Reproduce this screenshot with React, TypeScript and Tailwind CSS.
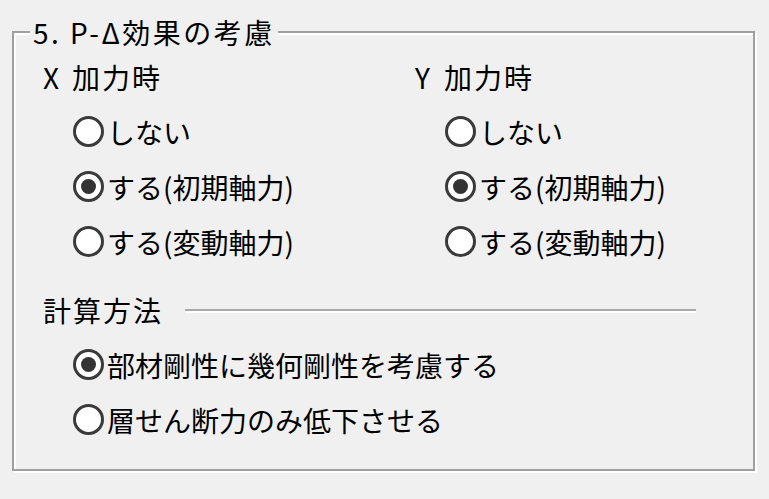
import React from "react";

const font = { fontFamily: '"Noto Sans CJK JP", "Noto Sans", sans-serif' };

function Radio({ checked, label }: { checked?: boolean; label: string }) {
  return (
    <div className="flex h-[55px] items-center gap-[3px]">
      <div className="flex h-[31px] w-[31px] shrink-0 items-center justify-center rounded-full border-[3px] border-[#3a3a3a] bg-white">
        {checked && <div className="h-[15px] w-[15px] rounded-full bg-[#333]" />}
      </div>
      <span className="whitespace-nowrap text-[28px] leading-none text-black">{label}</span>
    </div>
  );
}

function Column({ letter }: { letter: string }) {
  return (
    <div className="flex flex-col">
      <div className="flex h-[55px] items-center text-[28px] leading-none text-black">
        <span className="w-[29px]">{letter}</span>
        <span className="tracking-[2px]">加力時</span>
      </div>
      <div className="flex flex-col pl-[30px]">
        <Radio label="しない" />
        <Radio label="する(初期軸力)" checked />
        <Radio label="する(変動軸力)" />
      </div>
    </div>
  );
}

export default function App() {
  return (
    <div className="h-[499px] w-[769px] overflow-hidden bg-[#f0f0f0] pl-[12px] pt-[31px]" style={font}>
      <div className="relative h-[440px] w-[743px] border-2 border-[#a0a0a0] shadow-[inset_2px_2px_0_#ffffff,2px_2px_0_#ffffff]">
        <div className="absolute left-[16px] top-[-18px] bg-[#f0f0f0] pl-[3px] pr-[3px] text-[28px] leading-[34px] tracking-[2.5px] text-black whitespace-nowrap">
          5. P-Δ効果の考慮
        </div>
        <div className="flex flex-col pl-[29px] pt-[16px]">
          <div className="grid grid-cols-[372px_1fr]">
            <Column letter="X" />
            <Column letter="Y" />
          </div>
          <div className="mt-[13px] flex h-[55px] items-center">
            <span className="w-[142px] whitespace-nowrap text-[28px] leading-none tracking-[2px] text-black">計算方法</span>
            <div className="h-[2px] w-[511px] bg-[#a8a8a8] shadow-[0_2px_0_#ffffff]" />
          </div>
          <div className="flex flex-col pl-[30px]">
            <Radio label="部材剛性に幾何剛性を考慮する" checked />
            <Radio label="層せん断力のみ低下させる" />
          </div>
        </div>
      </div>
    </div>
  );
}
